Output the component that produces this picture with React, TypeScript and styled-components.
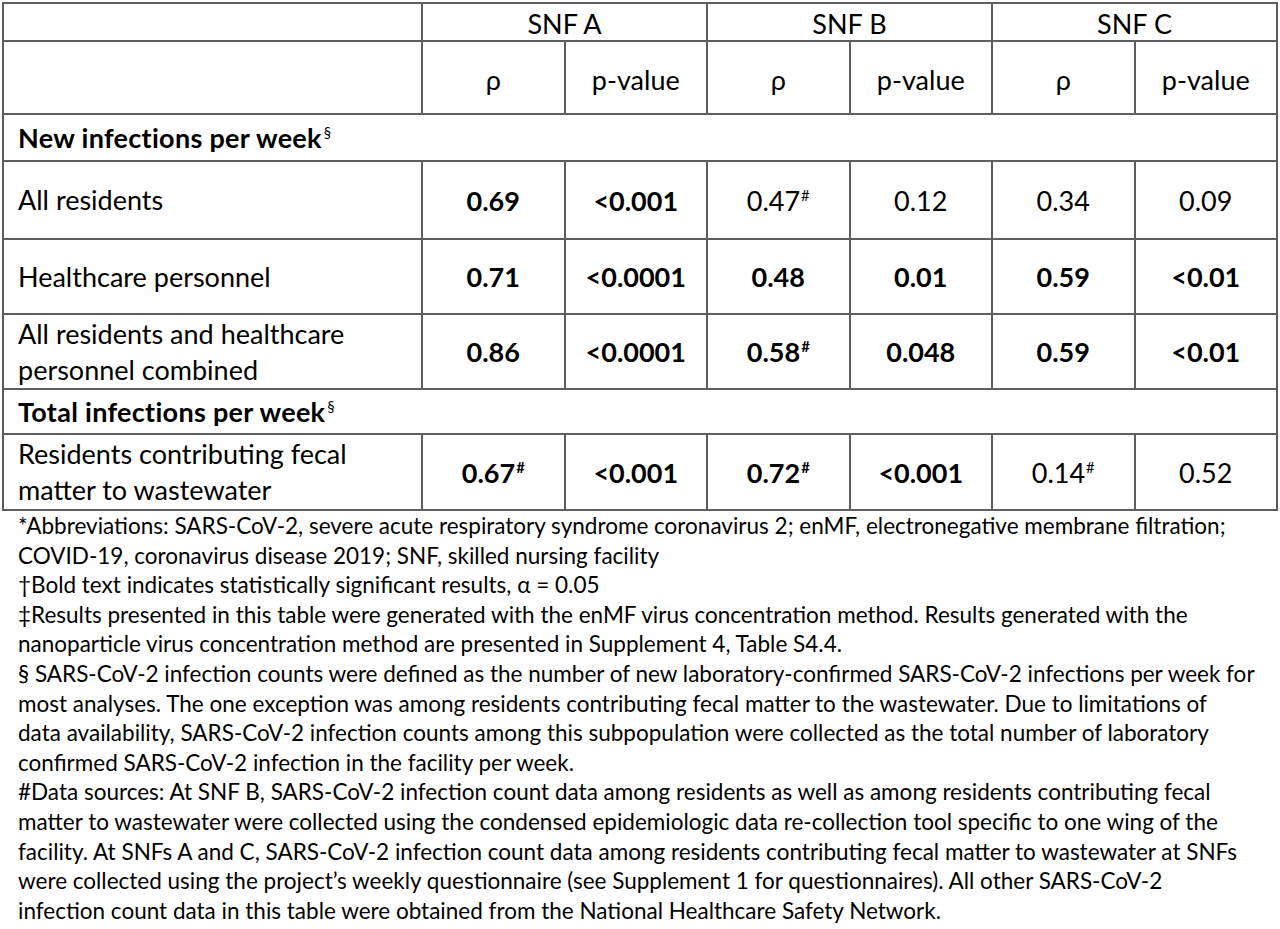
import React from "react";
import styled, { createGlobalStyle } from "styled-components";

const GlobalStyle = createGlobalStyle`
  body {
    margin: 0;
    background: #ffffff;
    color: #000000;
    font-family: Lato, "Liberation Sans", sans-serif;
  }
`;

const Page = styled.div`
  padding: 2px 0 0 2px;
  width: 1276px;
`;

const Table = styled.table`
  width: 1276px;
  border-collapse: collapse;
  table-layout: fixed;
  font-size: 27px;
`;

const Row = styled.tr<{ $h: number }>`
  height: ${(p) => p.$h}px;
`;

const HeadCell = styled.th`
  border: 2px solid #5e5e5e;
  font-weight: 400;
  text-align: center;
  vertical-align: middle;
  padding: 3px 0 0;
`;

const LabelCell = styled.td`
  border: 2px solid #5e5e5e;
  text-align: left;
  vertical-align: middle;
  padding: 0 14px;
  line-height: 36px;
`;

const SectionCell = styled.td`
  border: 2px solid #5e5e5e;
  text-align: left;
  vertical-align: middle;
  padding: 0 14px;
  font-weight: 700;
  letter-spacing: 0.3px;
`;

const Cell = styled.td<{ $bold?: boolean }>`
  border: 2px solid #5e5e5e;
  text-align: center;
  vertical-align: middle;
  font-weight: ${(p) => (p.$bold ? 700 : 400)};
`;

const Sup = styled.span`
  font-size: 0.55em;
  vertical-align: super;
  line-height: 0;
  margin-left: 1px;
`;

const SectionMark = styled(Sup)`
  font-weight: 400;
  font-size: 0.55em;
  margin-left: 2px;
`;

const Notes = styled.div`
  padding: 0 0 0 16px;
  font-size: 22.5px;
  line-height: 29.6px;
  white-space: nowrap;
`;

const NoteLine = styled.div``;

type Value = { v: string; b?: boolean; mark?: boolean };
type DataRow = { label: React.ReactNode; h: number; values: Value[] };

const sections: { title: string; h: number; rows: DataRow[] }[] = [
  {
    title: "New infections per week",
    h: 47,
    rows: [
      {
        label: "All residents",
        h: 78,
        values: [
          { v: "0.69", b: true },
          { v: "<0.001", b: true },
          { v: "0.47", mark: true },
          { v: "0.12" },
          { v: "0.34" },
          { v: "0.09" },
        ],
      },
      {
        label: "Healthcare personnel",
        h: 75,
        values: [
          { v: "0.71", b: true },
          { v: "<0.0001", b: true },
          { v: "0.48", b: true },
          { v: "0.01", b: true },
          { v: "0.59", b: true },
          { v: "<0.01", b: true },
        ],
      },
      {
        label: (
          <>
            All residents and healthcare
            <br />
            personnel combined
          </>
        ),
        h: 75,
        values: [
          { v: "0.86", b: true },
          { v: "<0.0001", b: true },
          { v: "0.58", b: true, mark: true },
          { v: "0.048", b: true },
          { v: "0.59", b: true },
          { v: "<0.01", b: true },
        ],
      },
    ],
  },
  {
    title: "Total infections per week",
    h: 45,
    rows: [
      {
        label: (
          <>
            Residents contributing fecal
            <br />
            matter to wastewater
          </>
        ),
        h: 76,
        values: [
          { v: "0.67", b: true, mark: true },
          { v: "<0.001", b: true },
          { v: "0.72", b: true, mark: true },
          { v: "<0.001", b: true },
          { v: "0.14", mark: true },
          { v: "0.52" },
        ],
      },
    ],
  },
];

const notes = [
  "*Abbreviations: SARS-CoV-2, severe acute respiratory syndrome coronavirus 2; enMF, electronegative membrane filtration;",
  "COVID-19, coronavirus disease 2019; SNF, skilled nursing facility",
  "\u2020Bold text indicates statistically significant results, \u03b1 = 0.05",
  "\u2021Results presented in this table were generated with the enMF virus concentration method. Results generated with the",
  "nanoparticle virus concentration method are presented in Supplement 4, Table S4.4.",
  "\u00a7 SARS-CoV-2 infection counts were defined as the number of new laboratory-confirmed SARS-CoV-2 infections per week for",
  "most analyses. The one exception was among residents contributing fecal matter to the wastewater. Due to limitations of",
  "data availability, SARS-CoV-2 infection counts among this subpopulation were collected as the total number of laboratory",
  "confirmed SARS-CoV-2 infection in the facility per week.",
  "#Data sources: At SNF B, SARS-CoV-2 infection count data among residents as well as among residents contributing fecal",
  "matter to wastewater were collected using the condensed epidemiologic data re-collection tool specific to one wing of the",
  "facility. At SNFs A and C, SARS-CoV-2 infection count data among residents contributing fecal matter to wastewater at SNFs",
  "were collected using the project\u2019s weekly questionnaire (see Supplement 1 for questionnaires). All other SARS-CoV-2",
  "infection count data in this table were obtained from the National Healthcare Safety Network.",
];

export default function App() {
  return (
    <Page>
      <GlobalStyle />
      <Table>
        <colgroup>
          <col style={{ width: 419 }} />
          <col />
          <col />
          <col />
          <col />
          <col />
          <col />
        </colgroup>
        <tbody>
          <Row $h={38}>
            <HeadCell />
            <HeadCell colSpan={2}>SNF A</HeadCell>
            <HeadCell colSpan={2}>SNF B</HeadCell>
            <HeadCell colSpan={2}>SNF C</HeadCell>
          </Row>
          <Row $h={73}>
            <HeadCell />
            {["A", "B", "C"].map((k) => (
              <React.Fragment key={k}>
                <HeadCell>ρ</HeadCell>
                <HeadCell>p-value</HeadCell>
              </React.Fragment>
            ))}
          </Row>
          {sections.map((s) => (
            <React.Fragment key={s.title}>
              <Row $h={s.h}>
                <SectionCell colSpan={7}>
                  {s.title}
                  <SectionMark>§</SectionMark>
                </SectionCell>
              </Row>
              {s.rows.map((r, i) => (
                <Row $h={r.h} key={i}>
                  <LabelCell>{r.label}</LabelCell>
                  {r.values.map((c, j) => (
                    <Cell $bold={c.b} key={j}>
                      {c.v}
                      {c.mark && <Sup>#</Sup>}
                    </Cell>
                  ))}
                </Row>
              ))}
            </React.Fragment>
          ))}
        </tbody>
      </Table>
      <Notes>
        {notes.map((n, i) => (
          <NoteLine key={i}>{n}</NoteLine>
        ))}
      </Notes>
    </Page>
  );
}
